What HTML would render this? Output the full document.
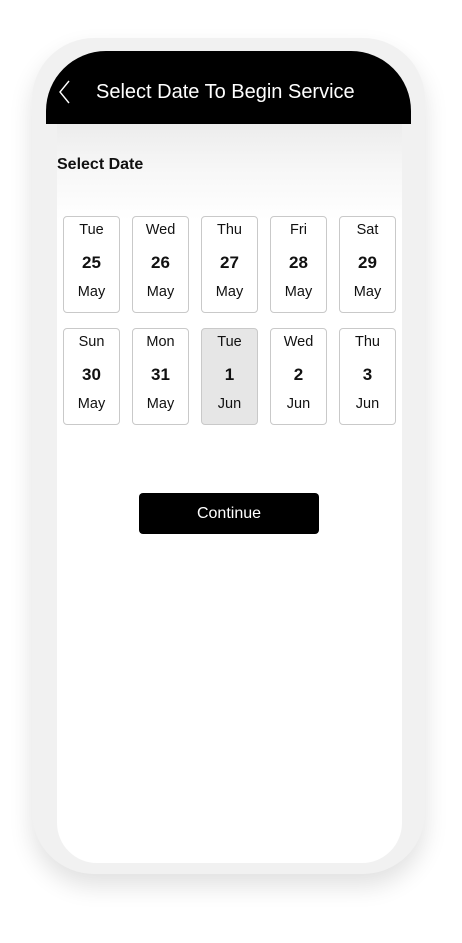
<!DOCTYPE html><html><head><style>
body{margin:0;width:462px;height:943px;background:#fff;position:relative;overflow:hidden;font-family:"Liberation Sans",sans-serif}
.frame{position:absolute;left:32px;top:38px;width:393px;height:836px;background:#f1f1f1;border-radius:62px;box-shadow:0 12px 24px rgba(0,0,0,.12)}
.screen{position:absolute;left:57px;top:110px;width:345px;height:753px;background:linear-gradient(#e9e9e9 0px,#f7f7f7 60px,#fff 110px,#fff);border-radius:0 0 40px 40px}
.hdr{position:absolute;left:46px;top:51px;width:365px;height:73px;background:#000;border-radius:60px 60px 0 0;color:#fff}
.hdr .t{position:absolute;left:50px;top:30px;font-size:20px}
.hdr svg{position:absolute;left:12px;top:28px}
.lbl{position:absolute;left:57px;top:156px;font-size:16px;font-weight:bold;color:#111}
.c{position:absolute;width:55px;height:95px;border:1px solid #c9c9c9;border-radius:4px;background:#fff;text-align:center;color:#111;font-size:14.5px}
.c.s{background:#e6e6e6}
.c div{position:absolute;left:0;right:0}
.c .a{top:5px}.c .b{top:36px;font-weight:bold;font-size:17px}.c .m{top:67px}
.btn{position:absolute;left:139px;top:493px;width:180px;height:41px;background:#000;border-radius:4px;color:#fff;font-size:16px;text-align:center;line-height:42px}
</style></head><body>
<div class="frame"></div>
<div class="screen"></div>
<div class="hdr"><svg width="14" height="26" viewBox="0 0 14 26"><path d="M11 2 L2 13 L11 24" stroke="#fff" stroke-width="1.4" fill="none"/></svg><div class="t">Select Date To Begin Service</div></div>
<div class="lbl">Select Date</div>
<div class="c" style="left:63px;top:216px"><div class="a">Tue</div><div class="b">25</div><div class="m">May</div></div>
<div class="c" style="left:132px;top:216px"><div class="a">Wed</div><div class="b">26</div><div class="m">May</div></div>
<div class="c" style="left:201px;top:216px"><div class="a">Thu</div><div class="b">27</div><div class="m">May</div></div>
<div class="c" style="left:270px;top:216px"><div class="a">Fri</div><div class="b">28</div><div class="m">May</div></div>
<div class="c" style="left:339px;top:216px"><div class="a">Sat</div><div class="b">29</div><div class="m">May</div></div>
<div class="c" style="left:63px;top:328px"><div class="a">Sun</div><div class="b">30</div><div class="m">May</div></div>
<div class="c" style="left:132px;top:328px"><div class="a">Mon</div><div class="b">31</div><div class="m">May</div></div>
<div class="c s" style="left:201px;top:328px"><div class="a">Tue</div><div class="b">1</div><div class="m">Jun</div></div>
<div class="c" style="left:270px;top:328px"><div class="a">Wed</div><div class="b">2</div><div class="m">Jun</div></div>
<div class="c" style="left:339px;top:328px"><div class="a">Thu</div><div class="b">3</div><div class="m">Jun</div></div>
<div class="btn">Continue</div>
</body></html>
